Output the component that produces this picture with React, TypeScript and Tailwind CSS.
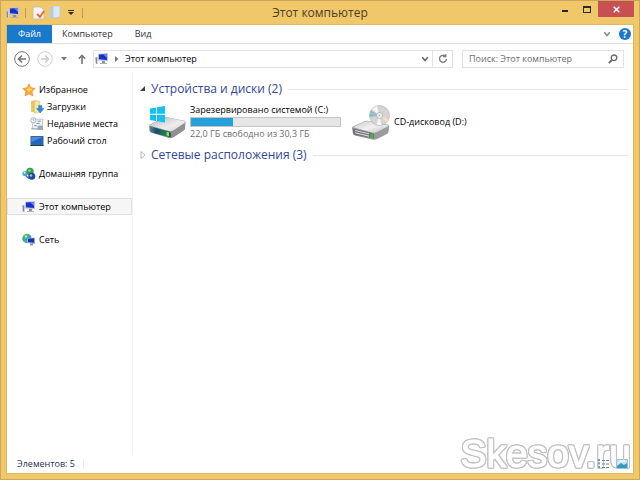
import type { ReactNode } from "react";

function MonitorIcon({ className = "" }: { className?: string }) {
  return (
    <svg viewBox="0 0 14 12" className={"h-3 w-3.5 shrink-0 " + className} aria-hidden="true">
      <path d="M0 4h3v7H1z" fill="#cdd3d8" />
      <path d="M.6 4.500h1.400v6H.8z" fill="#7e8b92" />
      <path d="M3 .8L13 0v8.300L3 7.500z" fill="#b9c2dd" />
      <path d="M4 1.600l8-.7v6L4 6.300z" fill="#1a2fc4" />
      <path d="M8 1.200l4-.3v4z" fill="#6d83ea" />
      <path d="M7 8h3v2H7z" fill="#8d939b" />
      <path d="M5 10h7v1H5z" fill="#aab0b8" />
    </svg>
  );
}

function StarIcon() {
  return (
    <svg viewBox="0 0 14 14" className="size-3.5 shrink-0" aria-hidden="true">
      <path d="M7 .8l1.900 4 4.300.6-3.200 3.100.9 4.400L7 10.800l-4 2.100.9-4.400L.8 5.400l4.300-.6z" fill="#fba83a" stroke="#e98a2d" strokeWidth=".7" />
      <path d="M7 2.500l1.200 3 2.800.4-4 3.200-3-3.200 2.600-.4z" fill="#ffd763" />
    </svg>
  );
}

function DownloadsIcon() {
  return (
    <svg viewBox="0 0 13 13" className="size-3.5 shrink-0" aria-hidden="true">
      <path d="M1 1l5-1v12l-5-1z" fill="#e3c466" />
      <path d="M4 1h5v11H4z" fill="#f6e5a4" stroke="#d9bd69" strokeWidth=".5" />
      <path d="M8 5h3v3h2l-3.500 4L6 8h2z" fill="#2e8be0" stroke="#1f6fc0" strokeWidth=".4" />
    </svg>
  );
}

function RecentIcon() {
  return (
    <svg viewBox="0 0 13 13" className="size-3.5 shrink-0" aria-hidden="true">
      <path d="M3 2h9l-1 9H2z" fill="#eef1f3" stroke="#abb6bd" strokeWidth=".7" />
      <path d="M7 4h3M6 6h3M4 8h2" stroke="#7e98ac" />
      <path d="M7 8h5v4H7z" fill="#99a9b5" />
      <circle cx="3" cy="3" r="2.400" fill="#f6f8f9" stroke="#93a0a8" strokeWidth=".7" />
      <path d="M3 1.500V3h1M1 11h6" fill="none" stroke="#8798a3" strokeWidth=".7" />
    </svg>
  );
}

function DesktopIcon() {
  return (
    <svg viewBox="0 0 13 12" className="h-3 w-3.5 shrink-0" aria-hidden="true">
      <path d="M0 1h13v10H0z" fill="#36659f" />
      <path d="M1 2h11v7H1z" fill="#2463be" />
      <path d="M1 2h11L1 7z" fill="#528ed8" />
      <path d="M0 10h13v1H0z" fill="#1d3967" />
    </svg>
  );
}

function HomegroupIcon() {
  return (
    <svg viewBox="0 0 14 13" className="size-3.5 shrink-0" aria-hidden="true">
      <circle cx="3" cy="6" r="2.600" fill="#4b9fdb" />
      <circle cx="2.600" cy="5.200" r="1.100" fill="#c8eafa" />
      <circle cx="8" cy="4" r="3.700" fill="#339d4d" />
      <circle cx="7.500" cy="3" r="1.300" fill="#8fd480" />
      <circle cx="9.800" cy="8.800" r="3.500" fill="#23479e" />
      <circle cx="9" cy="8" r="1.200" fill="#a7c7ef" />
      <path d="M4 8.500l3 2.500" stroke="#3b70c0" strokeWidth="1.600" />
    </svg>
  );
}

function NetworkIcon() {
  return (
    <svg viewBox="0 0 14 13" className="size-3.5 shrink-0" aria-hidden="true">
      <circle cx="5" cy="5" r="4.700" fill="#319ed1" />
      <path d="M1 3l3-2.500 3 1-2 3-2 1zM2 6l3 1-1 2z" fill="#6ac44b" />
      <circle cx="4" cy="3" r="1" fill="#d2f0c6" />
      <path d="M5 5l8-1v6.500l-8-1z" fill="#9daacb" />
      <path d="M6 5.500l6-.7v4.400L6 8.600z" fill="#1832b6" />
      <path d="M8 10h3v2H8z" fill="#8d98a8" />
    </svg>
  );
}

function SystemDriveIcon() {
  return (
    <svg viewBox="0 0 38 36" className="h-9 w-[38px] shrink-0" aria-hidden="true">
      <defs>
        <linearGradient id="driveTop" x1="0" y1="0" x2="1" y2="1">
          <stop offset="0" stopColor="#b5b7b9" />
          <stop offset=".6" stopColor="#eeeeef" />
          <stop offset="1" stopColor="#cfd0d1" />
        </linearGradient>
        <linearGradient id="driveFront" x1="0" y1="0" x2="1" y2="0">
          <stop offset="0" stopColor="#5d7f90" />
          <stop offset=".3" stopColor="#14506b" />
          <stop offset=".7" stopColor="#1f7862" />
          <stop offset="1" stopColor="#3d4547" />
        </linearGradient>
      </defs>
      <path d="M1 22.500Q1 21 3 20L15 14Q17 13 20 13.500L35 16.500Q38 17 37.500 19L37 25Q37 26 35 27L26 33Q24 34.500 21 34L4 29Q2 28.500 1.500 27z" fill="#8f9295" />
      <path d="M1.500 21.500L15 14Q17 13 20 13.500L36 17Q38 18 36.500 19L26 26Q24 27.500 21 27z" fill="url(#driveTop)" />
      <path d="M2 22.500L21 27.500Q23 28 23 30V32.500Q22.500 33.500 21 33L4 28.500Q2 28 2 26z" fill="url(#driveFront)" />
      <path d="M18.500 27.800l2.500.7v3.700l-2.500-.7z" fill="#86e845" />
      <path d="M2 4.500l6-1v6.300H2zM9 3.300L17 2v7.800H9zM2 10.800h6v6.300l-6-1zM9 10.800h8v7.800l-8-1.300z" fill="#14c1f3" />
    </svg>
  );
}

function CdDriveIcon() {
  return (
    <svg viewBox="0 0 38 36" className="h-9 w-[38px] shrink-0" aria-hidden="true">
      <defs>
        <linearGradient id="cdTop" x1="0" y1="0" x2="1" y2="1">
          <stop offset="0" stopColor="#c4c5c6" />
          <stop offset=".5" stopColor="#f1f1f1" />
          <stop offset="1" stopColor="#c3c4c5" />
        </linearGradient>
      </defs>
      <path d="M0 24Q0 22.500 2 22L12 17.500Q14 16.500 17 17L35 20.500Q37.500 21 37 23L36.500 28Q36 29.500 34 30.500L25 35Q23 36 20 35.500L3 31.500Q1 31 .8 29z" fill="#9a9b9c" />
      <path d="M1 23.300L12 17.800Q14 17 17 17.300L35 21Q37 22 35 23L25 28Q23 29 20 28.500z" fill="url(#cdTop)" />
      <path d="M1 24.500L20 29Q22 29.500 22 31V34.500L3 31Q1.500 30.500 1.300 29z" fill="#6e7073" />
      <path d="M3 26.500l14 3.300M3 28.800l14 3.300" stroke="#d4d8dc" strokeWidth="1.100" />
      <path d="M18.500 29.500l2.500.6v4l-2.500-.6z" fill="#48b83b" />
      <circle cx="27.500" cy="11.500" r="10" fill="#d4d4d4" stroke="#b4b4b4" strokeWidth=".7" />
      <path d="M27.500 11.500L20 5l5-3z" fill="#f6f6f6" />
      <path d="M27.500 11.500l-9.700-2.500v4z" fill="#6fcdb0" />
      <path d="M27.500 11.500l-8.500-5-1 2z" fill="#b99be0" />
      <path d="M27.500 11.500l9 3.500-2 3z" fill="#f0e1bf" />
      <path d="M27.500 11.500l9.700-1v3z" fill="#ecc9d8" />
      <path d="M27.500 11.500l-3 9 5 1z" fill="#f5f5f5" />
      <circle cx="27.500" cy="11.500" r="3" fill="#f4f4f4" stroke="#a5a5a5" strokeWidth=".7" />
      <circle cx="27.500" cy="11.500" r="1" fill="#bcbcbc" />
    </svg>
  );
}

function Chevron({ className = "" }: { className?: string }) {
  return (
    <svg viewBox="0 0 8 8" className={"size-2 shrink-0 " + className} fill="none" stroke="currentColor" strokeWidth="1.600" aria-hidden="true">
      <path d="M1.200 2.200L4 5.500 6.800 2.200" />
    </svg>
  );
}

function NavItem({ icon, label, nested = false, active = false }: { icon: ReactNode; label: string; nested?: boolean; active?: boolean }) {
  return (
    <li className={nested ? "pl-2" : ""}>
      <a
        href="#"
        aria-current={active ? "page" : undefined}
        className={
          "flex h-[17px] items-center gap-[3px] whitespace-nowrap border pl-[14px] " +
          (active ? "border-[#e2e2e2] bg-[#f6f6f6]" : "border-transparent")
        }
      >
        {icon}
        <span>{label}</span>
      </a>
    </li>
  );
}

function GroupHeader({ title, open = false }: { title: string; open?: boolean }) {
  return (
    <h2 className="flex h-4 items-center text-[12px] leading-4 text-[#31479a]">
      <button type="button" aria-expanded={open} className="flex items-center gap-1 whitespace-nowrap">
        <svg viewBox="0 0 8 8" className="size-2" aria-hidden="true">
          {open ? <path d="M6 1v5H1z" fill="#404040" /> : <path d="M2 .5L6 4 2 7.500z" fill="#fff" stroke="#a6a6a6" strokeWidth=".8" />}
        </svg>
        {title}
      </button>
      <span className="ml-1.5 h-px flex-1 bg-[#e6e6e6]" />
    </h2>
  );
}

export default function App() {
  return (
    <div className="relative flex h-screen flex-col border border-[#c9a75c] bg-[#f0c869] px-[5px] pb-[5px] font-['Open_Sans','Noto_Sans',sans-serif] text-[9px] leading-3 text-black">
      <header className="flex h-[23px] shrink-0 items-center">
        <div className="flex flex-1 items-center">
          <MonitorIcon />
          <span className="ml-[5px] h-2.5 w-px bg-[#b79c61]" />
          <button type="button" aria-label="Свойства" className="ml-1.5">
            <svg viewBox="0 0 13 14" className="h-3.5 w-[13px]" aria-hidden="true">
              <path d="M1 1h8l3 3v9H1z" fill="#f5f4f2" stroke="#c1b7a8" strokeWidth=".8" />
              <path d="M5 8l3 3 4-6" fill="none" stroke="#e86d3c" strokeWidth="2" />
            </svg>
          </button>
          <button type="button" aria-label="Новая папка" className="ml-[5px]">
            <svg viewBox="0 0 11 13" className="h-[13px] w-[11px]" aria-hidden="true">
              <path d="M0 1h4v11H0z" fill="#b6cbe3" />
              <path d="M3 0h7v11l-7 1z" fill="#dce7f2" stroke="#b3c7db" strokeWidth=".7" />
            </svg>
          </button>
          <button type="button" aria-label="Настройка панели быстрого доступа" className="ml-[7px]">
            <svg viewBox="0 0 6 6" className="size-1.5" aria-hidden="true">
              <path d="M0 0h6v1H0zM0 2h6L3 5z" fill="#342c1d" />
            </svg>
          </button>
          <span className="ml-2 h-2.5 w-px bg-[#b79c61]" />
        </div>
        <h1 className="whitespace-nowrap text-[12px] leading-4 text-[#4a3f28]">Этот компьютер</h1>
        <div className="flex flex-1 justify-end self-start">
          <button type="button" aria-label="Свернуть" className="flex h-4 w-[22px] items-center justify-center">
            <span className="mt-1 h-0.5 w-1.5 bg-[#292929]" />
          </button>
          <button type="button" aria-label="Развернуть" className="flex h-4 w-[22px] items-center justify-center">
            <span className="h-[7px] w-2 border border-t-2 border-[#292929]" />
          </button>
          <button type="button" aria-label="Закрыть" className="flex h-4 w-9 items-center justify-center bg-[#c75050] text-white">
            <svg viewBox="0 0 7 7" className="size-[7px]" stroke="currentColor" strokeWidth="1.500" aria-hidden="true">
              <path d="M.7.7l5.600 5.600M6.300.7L.7 6.300" />
            </svg>
          </button>
        </div>
      </header>

      <div className="flex min-h-0 flex-1 flex-col border border-[#dcb965] bg-white">
        <nav aria-label="Лента" className="flex h-[19px] shrink-0 items-stretch border-b border-[#dfe0e1] text-[#333]">
          <button type="button" className="w-[45px] bg-[#1979ca] text-white">Файл</button>
          <button type="button" className="px-2.5">Компьютер</button>
          <button type="button" className="px-3">Вид</button>
          <div className="ml-auto flex items-center gap-2 pr-0.5">
            <button type="button" aria-label="Развернуть ленту" className="text-[#8a8a8a]"><Chevron /></button>
            <button type="button" aria-label="Справка" className="size-3 rounded-full bg-[#1979ca] text-[10px] font-bold leading-3 text-white">?</button>
          </div>
        </nav>

        <div className="flex h-[30px] shrink-0 items-center pr-[9px] pl-[7px]">
          <button type="button" aria-label="Назад">
            <svg viewBox="0 0 16 16" className="size-4" fill="none" stroke="#747474" aria-hidden="true">
              <circle cx="8" cy="8" r="7.300" />
              <path d="M12 8H4.500M8 4.500L4.500 8 8 11.500" strokeWidth="1.600" />
            </svg>
          </button>
          <button type="button" aria-label="Вперед" className="ml-[7px]">
            <svg viewBox="0 0 16 16" className="size-4" fill="none" stroke="#cdcdcd" aria-hidden="true">
              <circle cx="8" cy="8" r="7.300" />
              <path d="M4 8h7.500M8 4.500L11.500 8 8 11.500" strokeWidth="1.600" />
            </svg>
          </button>
          <button type="button" aria-label="Последние расположения" className="ml-2">
            <svg viewBox="0 0 6 4" className="h-1 w-1.5" aria-hidden="true"><path d="M0 0h6L3 3.500z" fill="#777" /></svg>
          </button>
          <button type="button" aria-label="Вверх" className="ml-[11px]">
            <svg viewBox="0 0 8 10" className="h-2.5 w-2" fill="none" stroke="#777" strokeWidth="1.600" aria-hidden="true">
              <path d="M4 10V1.500M.8 4.800L4 1.500l3.200 3.300" />
            </svg>
          </button>
          <div className="ml-[7px] flex h-[18px] min-w-0 flex-1 items-center border border-[#e2e2e2] pl-px">
            <MonitorIcon />
            <svg viewBox="0 0 4 6" className="ml-1.5 h-1.5 w-1" aria-hidden="true"><path d="M0 0l3.500 3L0 6z" fill="#777" /></svg>
            <span className="ml-1.5 flex-1 whitespace-nowrap">Этот компьютер</span>
            <button type="button" aria-label="Журнал адресов" className="mr-[3px] text-[#666]"><Chevron /></button>
            <button type="button" aria-label="Обновить" className="flex h-4 w-5 items-center justify-center border-l border-[#e2e2e2]">
              <svg viewBox="0 0 10 10" className="size-2.5" fill="none" stroke="#7a7a7a" strokeWidth="1.300" aria-hidden="true">
                <path d="M7.500 2.300A3.500 3.500 0 1 0 8.500 5M5 2.600h2.800V0" />
              </svg>
            </button>
          </div>
          <label className="ml-[9px] flex h-[18px] w-[162px] items-center border border-[#e2e2e2] pr-[5px] pl-1.5">
            <input type="search" aria-label="Поиск" placeholder="Поиск: Этот компьютер" className="min-w-0 flex-1 bg-transparent outline-none placeholder:text-[#6d6d6d]" />
            <svg viewBox="0 0 10 10" className="size-2.5" fill="none" stroke="#6b6b6b" strokeWidth="1.400" aria-hidden="true">
              <circle cx="6" cy="3.800" r="2.800" />
              <path d="M4 6L.8 9.200" strokeWidth="1.800" />
            </svg>
          </label>
        </div>

        <div className="flex min-h-0 flex-1">
          <nav aria-label="Область навигации" className="w-[126px] shrink-0 border-r border-[#f2f2f2] pt-[7px]">
            <ul>
              <NavItem icon={<StarIcon />} label="Избранное" />
              <NavItem nested icon={<DownloadsIcon />} label="Загрузки" />
              <NavItem nested icon={<RecentIcon />} label="Недавние места" />
              <NavItem nested icon={<DesktopIcon />} label="Рабочий стол" />
            </ul>
            <ul className="mt-4 space-y-4">
              <NavItem icon={<HomegroupIcon />} label="Домашняя группа" />
              <NavItem active icon={<MonitorIcon />} label="Этот компьютер" />
              <NavItem icon={<NetworkIcon />} label="Сеть" />
            </ul>
          </nav>

          <main className="min-w-0 flex-1 pt-[7px] pr-[5px] pl-1.5">
            <GroupHeader open title="Устройства и диски (2)" />
            <div className="flex h-[50px] items-center pl-[9px]">
              <div className="flex w-[204px] items-center gap-1">
                <SystemDriveIcon />
                <div className="w-[151px]">
                  <p className="whitespace-nowrap">Зарезервировано системой (C:)</p>
                  <div className="my-px h-2.5 border border-[#c4c4c4] bg-[#e6e6e6]">
                    <div className="h-full w-[28%] bg-[#26a0da]" />
                  </div>
                  <p className="whitespace-nowrap text-[#6d6d6d]">22,0 ГБ свободно из 30,3 ГБ</p>
                </div>
              </div>
              <div className="flex items-center gap-1">
                <CdDriveIcon />
                <p className="whitespace-nowrap">CD-дисковод (D:)</p>
              </div>
            </div>
            <GroupHeader title="Сетевые расположения (3)" />
          </main>
        </div>

        <footer className="flex h-[18px] shrink-0 items-center pl-2.5 text-[#26344f]">
          <span>Элементов: 5</span>
          <span className="ml-2 h-2.5 w-px bg-[#ececec]" />
          <div className="relative z-10 ml-auto flex items-center gap-1.5 pr-[5px]">
            <button type="button" aria-label="Таблица">
              <svg viewBox="0 0 12 10" className="h-2.5 w-3" aria-hidden="true">
                <path d="M0 1h2M0 4.500h2M0 8h2" stroke="#7f95b8" strokeWidth="2" />
                <path d="M4 1.500h3M8 1.500h3M4 5h3M8 5h3M4 8.500h3M8 8.500h3" stroke="#6d7f96" />
              </svg>
            </button>
            <button type="button" aria-label="Крупные значки">
              <svg viewBox="0 0 12 10" className="h-2.5 w-3" aria-hidden="true">
                <path d="M.5.5h11v9H.5z" fill="#c4e4f5" stroke="#a2c0d6" />
                <path d="M1 7l4-3 3 2 3-2v5H1z" fill="#3c98ba" />
                <path d="M2 4l3-2h4" stroke="#fff" fill="none" />
              </svg>
            </button>
          </div>
        </footer>
      </div>

      <div className="pointer-events-none absolute right-2 bottom-[3px] whitespace-nowrap font-['Liberation_Sans',Arial,sans-serif] text-[39px] leading-[44px] text-white [-webkit-text-stroke:1px_#fff] [filter:drop-shadow(1px_0_0_#c2c2c2)_drop-shadow(-1px_0_0_#c2c2c2)_drop-shadow(0_1px_0_#c2c2c2)_drop-shadow(0_-1px_0_#c2c2c2)]">
        Skesov.ru
      </div>
    </div>
  );
}
